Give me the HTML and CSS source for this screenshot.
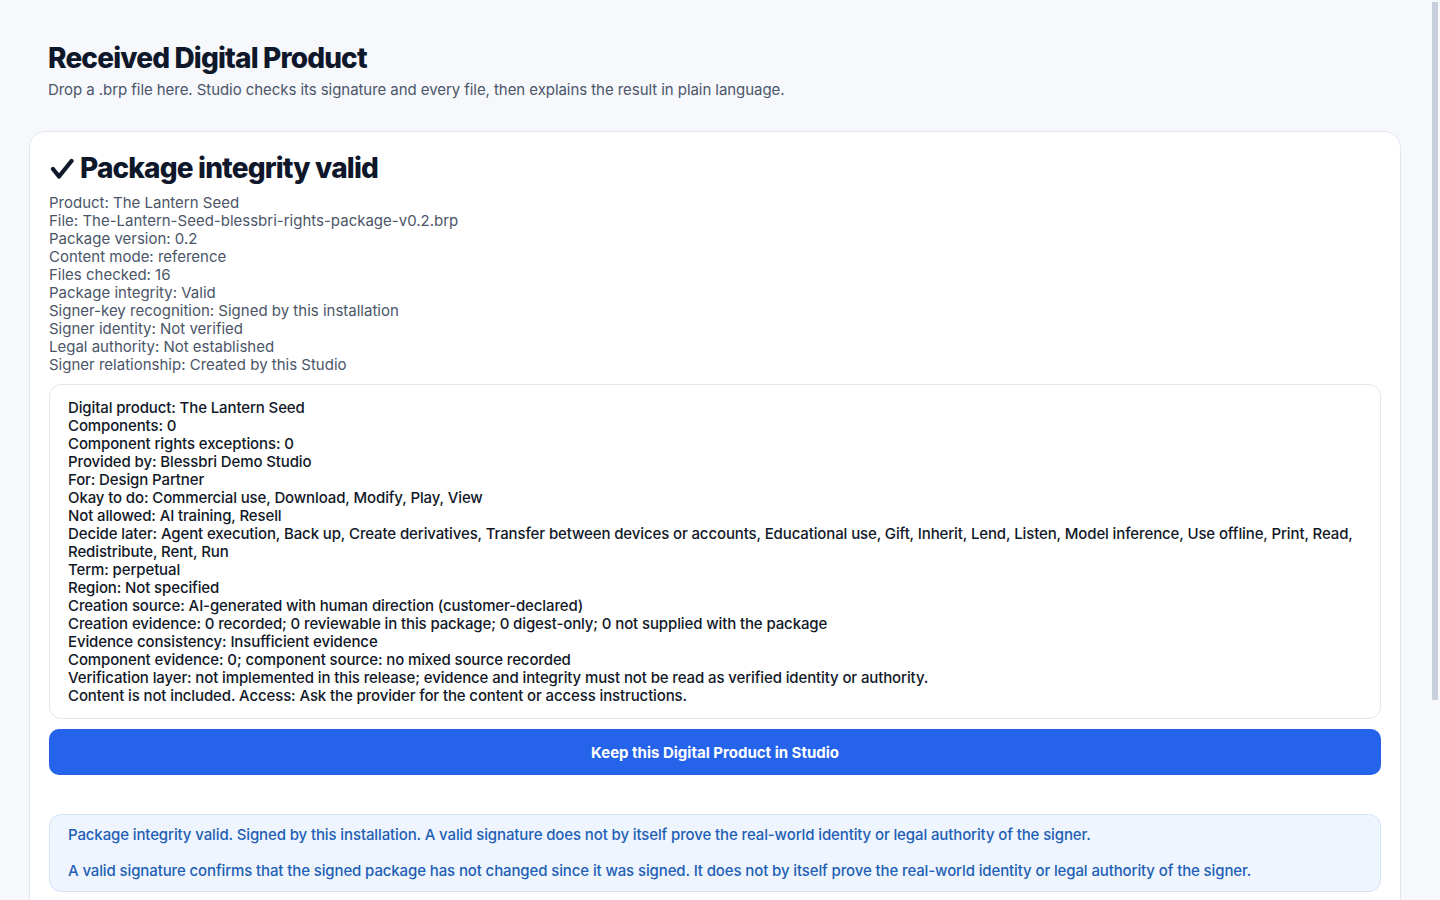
FILE: index.html
```html
<!DOCTYPE html>
<html lang="en">
<head>
    <meta charset="UTF-8">
    <meta name="viewport" content="width=device-width, initial-scale=1.0">
    <title>Received Digital Product</title>
    <link rel="stylesheet" href="styles.css">
</head>
<body>
    <main class="page">
        <header class="page-header">
            <h1 class="page-title">Received Digital Product</h1>
            <p class="page-subtitle">Drop a .brp file here. Studio checks its signature and every file, then explains the result in plain language.</p>
        </header>

        <section class="result-card">
            <h2 class="result-title">
                <svg class="check" width="24" height="22" viewBox="0 0 24 22" aria-hidden="true">
                    <polyline points="3,11 9,18.5 21.5,3" fill="none" stroke="#0f172a" stroke-width="4.2" stroke-linecap="round" stroke-linejoin="round"/>
                </svg>
                Package integrity valid
            </h2>

            <ul class="meta-list">
                <li>Product: The Lantern Seed</li>
                <li>File: The-Lantern-Seed-blessbri-rights-package-v0.2.brp</li>
                <li>Package version: 0.2</li>
                <li>Content mode: reference</li>
                <li>Files checked: 16</li>
                <li>Package integrity: Valid</li>
                <li>Signer-key recognition: Signed by this installation</li>
                <li>Signer identity: Not verified</li>
                <li>Legal authority: Not established</li>
                <li>Signer relationship: Created by this Studio</li>
            </ul>

            <div class="summary-box">
                <ul class="summary-list">
                    <li>Digital product: The Lantern Seed</li>
                    <li>Components: 0</li>
                    <li>Component rights exceptions: 0</li>
                    <li>Provided by: Blessbri Demo Studio</li>
                    <li>For: Design Partner</li>
                    <li>Okay to do: Commercial use, Download, Modify, Play, View</li>
                    <li>Not allowed: AI training, Resell</li>
                    <li>Decide later: Agent execution, Back up, Create derivatives, Transfer between devices or accounts, Educational use, Gift, Inherit, Lend, Listen, Model inference, Use offline, Print, Read, Redistribute, Rent, Run</li>
                    <li>Term: perpetual</li>
                    <li>Region: Not specified</li>
                    <li>Creation source: AI-generated with human direction (customer-declared)</li>
                    <li>Creation evidence: 0 recorded; 0 reviewable in this package; 0 digest-only; 0 not supplied with the package</li>
                    <li>Evidence consistency: Insufficient evidence</li>
                    <li>Component evidence: 0; component source: no mixed source recorded</li>
                    <li>Verification layer: not implemented in this release; evidence and integrity must not be read as verified identity or authority.</li>
                    <li>Content is not included. Access: Ask the provider for the content or access instructions.</li>
                </ul>
            </div>

            <button class="keep-button" type="button">Keep this Digital Product in Studio</button>

            <div class="notice">
                <p>Package integrity valid. Signed by this installation. A valid signature does not by itself prove the real-world identity or legal authority of the signer.</p>
                <p>A valid signature confirms that the signed package has not changed since it was signed. It does not by itself prove the real-world identity or legal authority of the signer.</p>
            </div>

            <div class="card-more"></div>
        </section>
    </main>

    <div class="scrollbar"><div class="scrollbar-thumb"></div></div>
</body>
</html>
```

FILE: styles.css
```css
/* reset */
* {
    margin: 0;
    padding: 0;
    box-sizing: border-box;
}

html,
body {
    height: 100%;
    overflow: hidden;
}

body {
    font-family: Inter, 'Liberation Sans', Arial, sans-serif;
    background-color: #f6f8fc;
    color: #0f172a;
}

.page {
    padding: 40px 39px 0 29px;
}

/* header */
.page-header {
    padding: 0 19px;
    margin-bottom: 30px;
}

.page-title {
    font-size: 28px;
    font-weight: 800;
    line-height: 36px;
    letter-spacing: -0.03em;
    color: #0f172a;
}

.page-subtitle {
    font-size: 15px;
    line-height: 22px;
    color: #4b5568;
    margin-top: 3px;
    letter-spacing: -0.06px;
}

/* result card */
.result-card {
    background-color: #ffffff;
    border: 1px solid #e1e6ef;
    border-radius: 16px;
    padding: 19px 19px 0;
}

.result-title {
    display: flex;
    align-items: center;
    gap: 6px;
    font-size: 28px;
    font-weight: 800;
    line-height: 34px;
    letter-spacing: -0.03em;
    color: #0f172a;
    margin-bottom: 9px;
}

.check {
    flex: none;
    margin-left: 1px;
    margin-top: 1px;
}

.meta-list,
.summary-list {
    list-style: none;
    font-size: 15px;
    line-height: 18px;
}

.meta-list {
    color: #4b5568;
}

.summary-box {
    margin-top: 10px;
    border: 1px solid #e1e6ef;
    border-radius: 12px;
    padding: 14px 18px 13px;
}

.summary-list {
    color: #111827;
    font-weight: 500;
    letter-spacing: -0.12px;
}

/* button */
.keep-button {
    display: block;
    width: 100%;
    height: 46px;
    margin-top: 10px;
    border: none;
    border-radius: 10px;
    background-color: #2563eb;
    color: #ffffff;
    font-family: inherit;
    font-size: 15px;
    font-weight: 700;
    cursor: pointer;
}

/* notice */
.notice {
    margin-top: 39px;
    background-color: #eef5fe;
    border: 1px solid #d3e3f8;
    border-radius: 12px;
    padding: 11px 18px;
    color: #1f5fb5;
    font-size: 15px;
    font-weight: 500;
    line-height: 18px;
    letter-spacing: -0.12px;
}

.notice p + p {
    margin-top: 18px;
}

.card-more {
    height: 60px;
}

/* fake scrollbar */
.scrollbar {
    position: fixed;
    top: 0;
    right: 0;
    width: 10px;
    height: 100%;
    background-color: #f6f8fc;
}

.scrollbar-thumb {
    margin: 2px 2px 0 2px;
    width: 6px;
    height: 698px;
    background-color: #c6cfdb;
}
```
